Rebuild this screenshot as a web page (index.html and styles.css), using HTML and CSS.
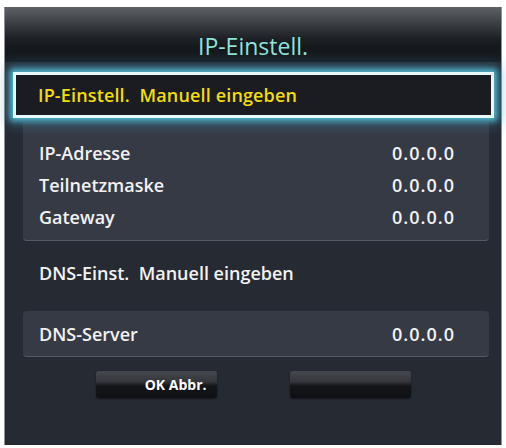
FILE: index.html
```html
<!DOCTYPE html>
<html lang="de">
<head>
<meta charset="utf-8">
<title>IP-Einstell.</title>
<link rel="stylesheet" href="styles.css">
</head>
<body>
<div class="panel">
  <div class="header"><h1 class="title">IP-Einstell.</h1></div>
  <div class="body">
    <div class="selected"><span>IP-Einstell.&nbsp; Manuell eingeben</span></div>
    <div class="group">
      <div class="row"><span>IP-Adresse</span><span class="val">0.0.0.0</span></div>
      <div class="row"><span>Teilnetzmaske</span><span class="val">0.0.0.0</span></div>
      <div class="row"><span>Gateway</span><span class="val">0.0.0.0</span></div>
    </div>
    <div class="plain">DNS-Einst.&nbsp; Manuell eingeben</div>
    <div class="group single">
      <div class="row"><span>DNS-Server</span><span class="val">0.0.0.0</span></div>
    </div>
    <div class="buttons">
      <div class="btn">OK Abbr.</div>
      <div class="btn"></div>
    </div>
  </div>
</div>
</body>
</html>
```
FILE: styles.css
```css
* { box-sizing: border-box; }
html, body { margin: 0; padding: 0; background: #ffffff; }
body { font-family: "Open Sans", "Noto Sans", sans-serif; }

.panel {
  margin: 7px 0 0 4px;
  width: 498px;
  height: 438px;
  background: #262a33;
  border-left: 1px solid #8d9096;
  border-right: 1px solid #8d9096;
  display: flex;
  flex-direction: column;
}

.header {
  height: 55px;
  background: linear-gradient(#5e6166 0, #3c3f44 16px, #1c1f24 32px, #15181d 40px, #181b21 100%);
  display: flex;
  justify-content: center;
}
.title {
  margin: 24px 0 0 0;
  font-size: 23px;
  font-weight: 400;
  line-height: 30px;
  color: #8fe2da;
}

.body {
  padding: 10px 0 0 8px;
  display: flex;
  flex-direction: column;
}

.selected {
  width: 481px;
  height: 46px;
  border: 3px solid #e6f9fb;
  background: #1b1c22;
  box-shadow: 0 0 6px 3px rgba(90, 205, 230, 0.85), 0 0 14px 6px rgba(60, 150, 180, 0.45);
  display: flex;
  align-items: center;
  padding-left: 22px;
  color: #f2dc0a;
  font-size: 18px;
  font-weight: 600;
  letter-spacing: 0.15px;
  position: relative;
  z-index: 1;
}

.group {
  margin: 4px 0 0 10px;
  width: 466px;
  padding: 15px 35px 7px 16px;
  background: #363a45;
  border-bottom: 1px solid #555a66;
  border-radius: 0 0 4px 4px;
}
.row {
  height: 32px;
  display: flex;
  justify-content: space-between;
  align-items: center;
  color: #f2f2f2;
  font-size: 18px;
  font-weight: 600;
}
.val { letter-spacing: 1px; margin-right: -1px; }

.plain {
  margin: 14px 0 0 26px;
  height: 36px;
  display: flex;
  align-items: center;
  color: #f2f2f2;
  font-size: 18px;
  font-weight: 600;
}

.group.single {
  margin-top: 20px;
  padding: 7px 35px 6px 16px;
  border-radius: 4px;
}

.buttons {
  margin-top: 14px;
  display: flex;
  justify-content: center;
  gap: 73px;
  padding-right: 8px;
}
.btn {
  width: 121px;
  height: 27px;
  border-radius: 3px;
  background: linear-gradient(#45484e 0, #34363b 40%, #141518 55%, #0f1013 100%);
  box-shadow: 0 1px 2px rgba(0, 0, 0, 0.5);
  color: #ffffff;
  font-size: 14px;
  font-weight: 700;
  display: flex;
  align-items: center;
  justify-content: flex-end;
  padding-right: 10px;
}
```
